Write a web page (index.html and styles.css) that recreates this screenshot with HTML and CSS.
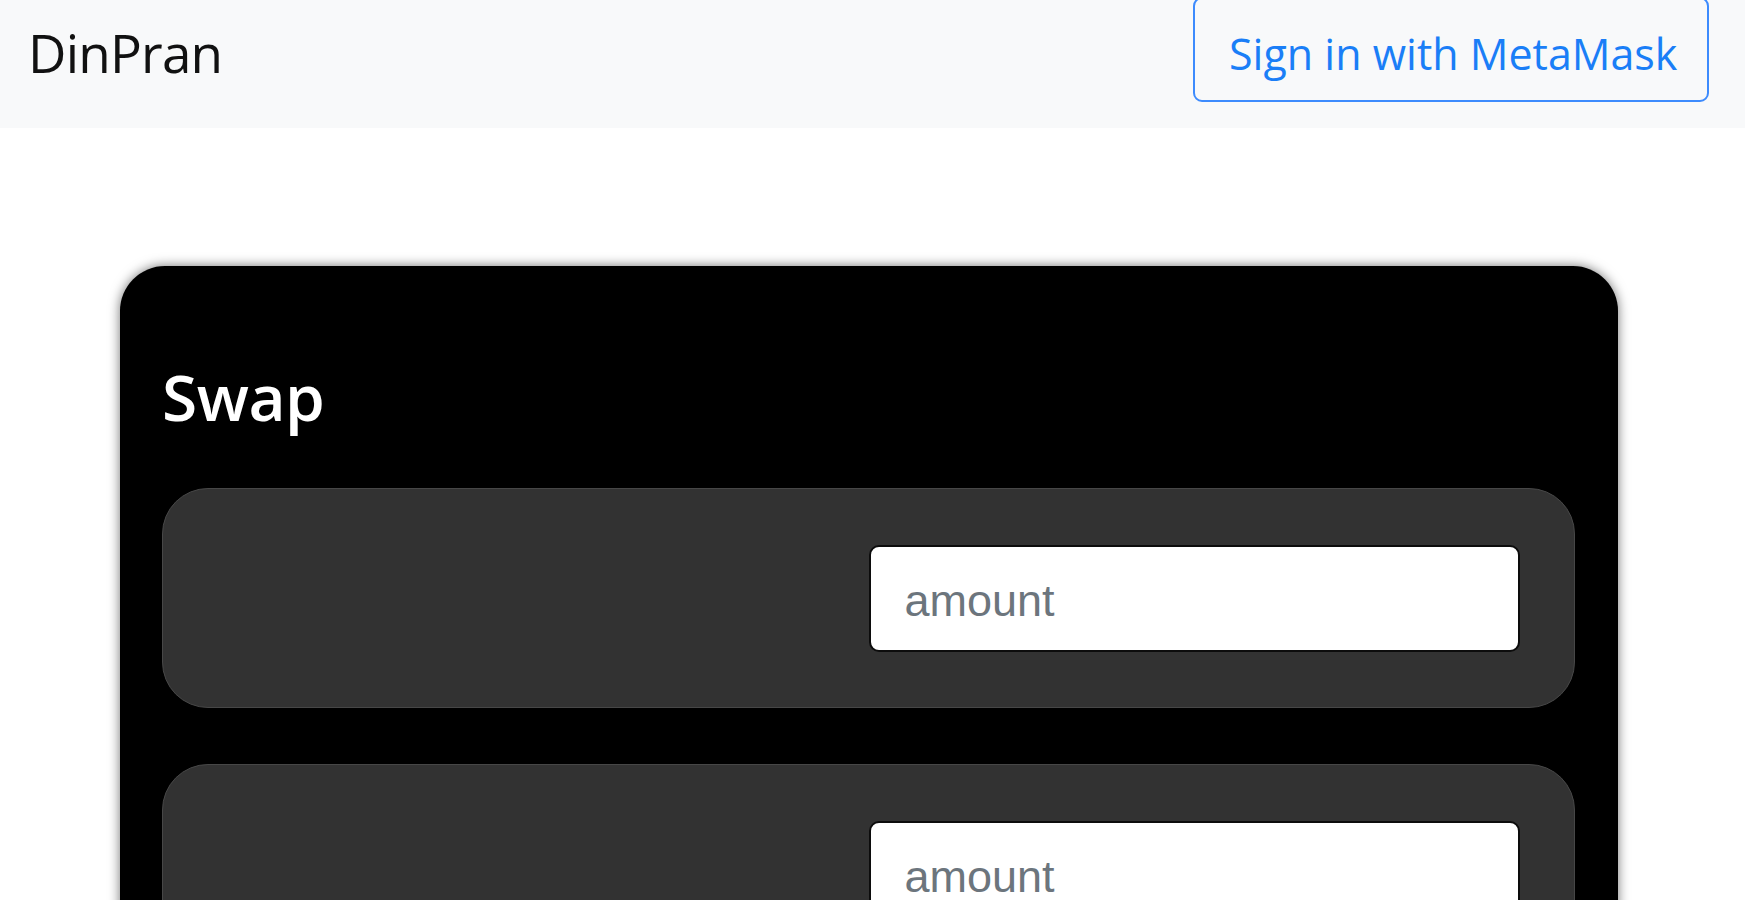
FILE: index.html
```html
<!DOCTYPE html>
<html lang="en">
<head>
<meta charset="utf-8">
<title>DinPran</title>
<link rel="stylesheet" href="styles.css">
</head>
<body>
<nav class="navbar">
  <a class="brand" href="#">DinPran</a>
  <button class="btn-outline" type="button">Sign in with MetaMask</button>
</nav>
<main class="main">
  <section class="swap-card">
    <h2 class="swap-title">Swap</h2>
    <div class="swap-panel">
      <div class="token-col"></div>
      <div class="amount-col"><input class="amount-input" type="text" placeholder="amount"></div>
    </div>
    <div class="swap-panel">
      <div class="token-col"></div>
      <div class="amount-col"><input class="amount-input" type="text" placeholder="amount"></div>
    </div>
  </section>
</main>
</body>
</html>
```
FILE: styles.css
```css
* { box-sizing: border-box; }
html, body { margin: 0; padding: 0; background: #ffffff; overflow: hidden; }
body { font-family: "Open Sans", "Noto Sans", sans-serif; color: #212529; height: 900px; }

.navbar {
  height: 128px;
  background: #f8f9fa;
  display: flex;
  justify-content: space-between;
  align-items: flex-start;
  padding: 0 36px 0 28px;
}
.brand {
  font-size: 53px;
  line-height: 106px;
  color: #111;
  text-decoration: none;
  letter-spacing: -0.8px;
}
.btn-outline {
  margin-top: -3px;
  height: 105px;
  width: 516px;
  background: transparent;
  border: 2px solid #3d8bfd;
  border-radius: 9px;
  color: #1a7ef7;
  font-family: "Open Sans", "Noto Sans", sans-serif;
  font-size: 43px;
  padding: 7px 34px 0;
  white-space: nowrap;
}

.main { padding: 138px 0 0 120px; }
.swap-card {
  width: 1498px;
  min-height: 900px;
  background: #000;
  border-radius: 45px;
  box-shadow: 0 0 12px rgba(0, 0, 0, 0.55);
  padding: 92px 43px 0 42px;
}
.swap-title {
  margin: 0 0 53px 0;
  font-size: 64px;
  line-height: 77px;
  font-weight: 600;
  color: #fff;
  letter-spacing: -0.5px;
}
.swap-panel {
  height: 220px;
  margin-bottom: 56px;
  background: #323232;
  border: 1px solid #474747;
  border-radius: 46px;
  display: grid;
  grid-template-columns: 1fr 1fr;
  align-items: center;
}
.amount-col { padding-right: 54px; }
.amount-input {
  display: block;
  width: 100%;
  height: 107px;
  background: #fff;
  border: 2px solid #0c0c0c;
  border-radius: 10px;
  padding: 6px 0 0 34px;
  font-family: "Liberation Sans", Arial, sans-serif;
  font-size: 45px;
  color: #495057;
  outline: none;
}
.amount-input::placeholder { color: #6c757d; opacity: 1; }
```
